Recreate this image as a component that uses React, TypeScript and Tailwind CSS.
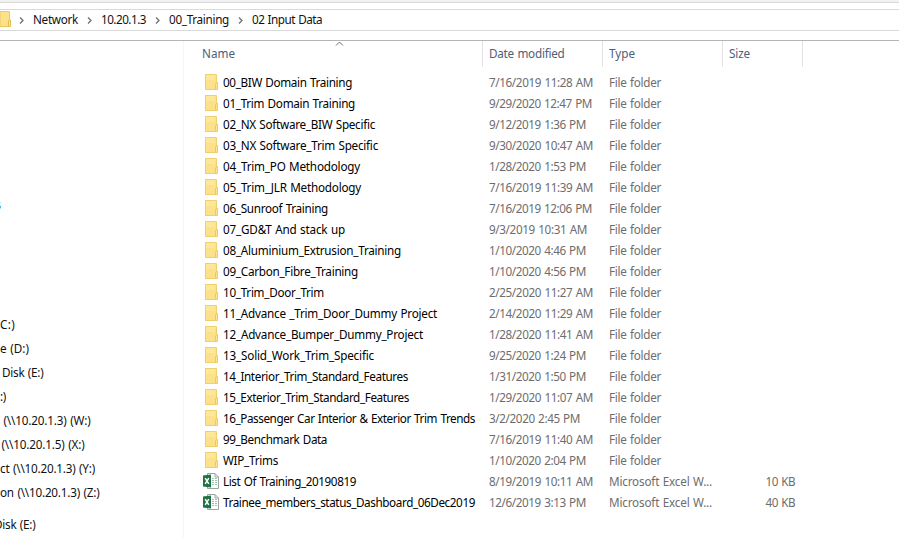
import { useLayoutEffect, useRef } from "react";

type FitProps = { text: string; width: number; className?: string };

// Tracks a label so that it takes exactly the given advance width.
function Fit({ text, width, className = "" }: FitProps) {
  const ref = useRef<HTMLSpanElement>(null);
  useLayoutEffect(() => {
    const el = ref.current;
    if (!el) return;
    const apply = () => {
      el.style.letterSpacing = "0px";
      const natural = el.getBoundingClientRect().width;
      el.style.letterSpacing = `${(width - natural) / text.length}px`;
    };
    apply();
    document.fonts.ready.then(apply);
  }, [text, width]);
  return (
    <span ref={ref} className={`inline-block shrink-0 pb-[2px] whitespace-pre [word-spacing:0.7px] ${className}`}>
      {text}
    </span>
  );
}

type Row = [name: string, nameWidth: number, date: string, dateWidth: number, size?: string];

const rows: Row[] = [
  ["00_BIW Domain Training", 129, "7/16/2019 11:28 AM", 104],
  ["01_Trim Domain Training", 132, "9/29/2020 12:47 PM", 103],
  ["02_NX Software_BIW Specific", 152, "9/12/2019 1:36 PM", 97],
  ["03_NX Software_Trim Specific", 155, "9/30/2020 10:47 AM", 104],
  ["04_Trim_PO Methodology", 137, "1/28/2020 1:53 PM", 97],
  ["05_Trim_JLR Methodology", 138, "7/16/2019 11:39 AM", 104],
  ["06_Sunroof Training", 105, "7/16/2019 12:06 PM", 103],
  ["07_GD&T And stack up", 122, "9/3/2019 10:31 AM", 98],
  ["08_Aluminium_Extrusion_Training", 178, "1/10/2020 4:46 PM", 97],
  ["09_Carbon_Fibre_Training", 135, "1/10/2020 4:56 PM", 97],
  ["10_Trim_Door_Trim", 101, "2/25/2020 11:27 AM", 104],
  ["11_Advance _Trim_Door_Dummy Project", 214, "2/14/2020 11:29 AM", 104],
  ["12_Advance_Bumper_Dummy_Project", 200, "1/28/2020 11:41 AM", 104],
  ["13_Solid_Work_Trim_Specific", 151, "9/25/2020 1:24 PM", 97],
  ["14_Interior_Trim_Standard_Features", 185, "1/31/2020 1:50 PM", 97],
  ["15_Exterior_Trim_Standard_Features", 186, "1/29/2020 11:07 AM", 104],
  ["16_Passenger Car Interior & Exterior Trim Trends", 252, "3/2/2020 2:45 PM", 91],
  ["99_Benchmark Data", 104, "7/16/2019 11:40 AM", 104],
  ["WIP_Trims", 55, "1/10/2020 2:04 PM", 97],
  ["List Of Training_20190819", 133, "8/19/2019 10:11 AM", 104, "10 KB"],
  ["Trainee_members_status_Dashboard_06Dec2019", 252, "12/6/2019 3:13 PM", 97, "40 KB"],
];

function FolderIcon() {
  return (
    <svg width="16" height="16" viewBox="0 0 16 16" className="mb-[2px] shrink-0">
      <path d="M2 0H13V16H2Z" fill="#fce08a" />
      <path d="M3 1H12V6H3Z" fill="#fde799" />
      <path d="M2.5 16V0.5H13.5V9" fill="none" stroke="#f0d06d" />
      <path d="M2 15.5H12" stroke="#f0cf6c" />
      <path d="M12.5 15.5V10L13.5 8.5H14.5V15.5Z" fill="#ffe48a" stroke="#ebc65a" strokeWidth="0.9" />
    </svg>
  );
}

function ExcelIcon() {
  return (
    <svg width="16" height="16" viewBox="0 0 16 16" className="mb-[2px] shrink-0">
      <path d="M4.5 0.5H12L15.5 4V15.5H4.5Z" fill="#fff" stroke="#a2a2a2" />
      <path d="M12 0.5V4H15.5" fill="none" stroke="#a2a2a2" />
      <path d="M9 5.5H11M9 7.5H11M9 9.5H11M9 11.5H11M12 5.5H14M12 7.5H14M12 9.5H14M12 11.5H14" stroke="#9cc5af" />
      <path d="M0 2.5L8 1.5V14.5L0 13.5Z" fill="#207245" />
      <path d="M2.2 5.2L5.8 10.8M5.8 5.2L2.2 10.8" stroke="#fff" strokeWidth="1.5" />
    </svg>
  );
}

function Crumb({ text, width, gap }: { text: string; width: number; gap: string }) {
  return (
    <div className={`flex items-center ${gap}`}>
      <svg width="5" height="7" viewBox="0 0 5 7" className="mr-[9px] shrink-0">
        <path d="M1 0.5L4 3.5L1 6.5" fill="none" stroke="#6f6f6f" strokeWidth="1.3" />
      </svg>
      <Fit text={text} width={width} />
    </div>
  );
}

function Drive({ text, width, right }: { text: string; width: number; right: string }) {
  return (
    <div className={`flex h-6 items-center justify-end overflow-hidden ${right}`}>
      <Fit text={text} width={width} />
    </div>
  );
}

export default function App() {
  return (
    <div className="flex h-[538px] w-[899px] flex-col overflow-hidden bg-white font-['Noto_Sans','Open_Sans',sans-serif] text-[11.7px] leading-[16px] text-[#111]">
      <div className="h-[3px] shrink-0 border-b border-[#d9d9d9] bg-[#f2f2f2]" />
      <div className="mt-[6px] flex h-[22px] shrink-0 items-center border-y border-[#d9d9d9]">
        <svg width="12" height="16" viewBox="0 0 12 16" className="mb-[2px] shrink-0">
          <path d="M0 0.5H9.5V15.5H0Z" fill="#fce18a" stroke="#eecb62" />
          <path d="M8.5 15.5V10L9.5 9H10.5V15.5Z" fill="#ffe794" stroke="#e3bd50" />
        </svg>
        <Crumb text="Network" width={45} gap="ml-[7px]" />
        <Crumb text="10.20.1.3" width={45} gap="ml-[9px]" />
        <Crumb text="00_Training" width={60} gap="ml-[9px]" />
        <Crumb text="02 Input Data" width={70} gap="ml-[9px]" />
      </div>
      <div className="mt-[9px] h-px shrink-0 bg-[#b5b5b5]" />
      <div className="flex min-h-0 flex-1">
        <aside className="flex w-[184px] shrink-0 flex-col border-r border-[#f6f6f6] pt-[152px]">
          <div className="mb-[96px] text-[#2b78c5]">
            <Drive text="s" width={6} right="w-[1.5px]" />
          </div>
          <Drive text="C:)" width={15} right="w-[15px]" />
          <Drive text="e (D:)" width={29} right="w-[29px]" />
          <Drive text="Disk (E:)" width={41.5} right="w-[43.5px]" />
          <Drive text=":)" width={6} right="w-[6px]" />
          <Drive text="(\\10.20.1.3) (W:)" width={87} right="w-[90.5px]" />
          <Drive text="(\\10.20.1.5) (X:)" width={83} right="w-[84.5px]" />
          <Drive text="ct (\\10.20.1.3) (Y:)" width={95} right="w-[95px]" />
          <Drive text="on (\\10.20.1.3) (Z:)" width={99.5} right="w-[99.5px]" />
          <div className="mt-2">
            <Drive text="Disk (E:)" width={41.5} right="w-[35.5px]" />
          </div>
        </aside>
        <main className="flex flex-1 flex-col">
          <div className="flex h-[26px] shrink-0 items-center text-[#4c607a]">
            <div className="flex h-full w-[299px] items-center border-r border-[#e2e2e2] pl-[18px]">
              <Fit text="Name" width={33} />
              <svg width="9" height="5" viewBox="0 0 9 5" className="ml-[100px] shrink-0 self-start">
                <path d="M1 4.5L4.5 1L8 4.5" fill="none" stroke="#6d6d6d" />
              </svg>
            </div>
            <div className="flex h-full w-[120px] items-center border-r border-[#e2e2e2] pl-[6px]">
              <Fit text="Date modified" width={75.5} />
            </div>
            <div className="flex h-full w-[120px] items-center border-r border-[#e2e2e2] pl-[6px]">
              <Fit text="Type" width={26} />
            </div>
            <div className="flex h-full w-[80px] items-center border-r border-[#e2e2e2] pl-[6px]">
              <Fit text="Size" width={21} />
            </div>
          </div>
          <div className="mt-[5px]">
            {rows.map(([name, nameWidth, date, dateWidth, size]) => (
              <div key={name} className="flex h-[21px] items-center text-[#6d6d6d]">
                <div className="flex w-[305px] shrink-0 items-center gap-[4px] pl-[19px] text-black">
                  {size ? <ExcelIcon /> : <FolderIcon />}
                  <Fit text={name} width={nameWidth} />
                </div>
                <div className="flex w-[120px] shrink-0">
                  <Fit text={date} width={dateWidth} />
                </div>
                <div className="flex w-[120px] shrink-0">
                  {size ? <Fit text="Microsoft Excel W..." width={103} /> : <Fit text="File folder" width={52} />}
                </div>
                <div className="flex w-[66px] shrink-0 justify-end">{size && <Fit text={size} width={29.5} />}</div>
              </div>
            ))}
          </div>
        </main>
      </div>
    </div>
  );
}
